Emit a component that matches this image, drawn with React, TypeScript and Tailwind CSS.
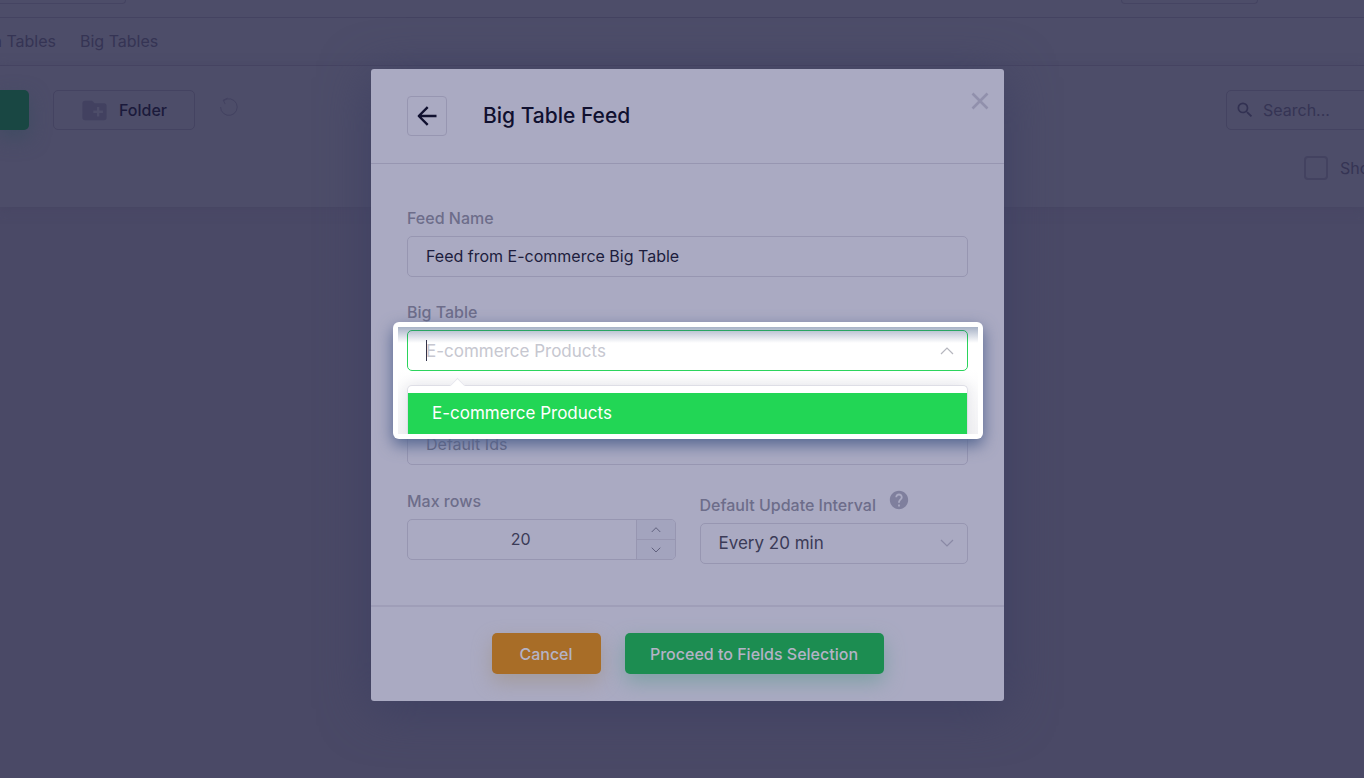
import React from "react";
import { MdCreateNewFolder, MdHelp, MdSearch } from "react-icons/md";

const fieldLabel = "block text-[16px] leading-5 font-medium text-[#6d6d8a]";
const fieldBox = "h-[41px] w-full rounded-[5px] border border-[#9796b1] bg-transparent outline-none";

function Chevron({ up = false, className = "" }: { up?: boolean; className?: string }) {
  return (
    <svg viewBox="0 0 14 8" fill="none" stroke="currentColor" className={className} aria-hidden="true">
      <path strokeWidth="1.2" d={up ? "M1 7l6-6 6 6" : "M1 1l6 6 6-6"} />
    </svg>
  );
}

function Backdrop() {
  return (
    <div className="min-h-screen overflow-hidden bg-[#4a4966]">
      <div className="flex h-[18px] items-start justify-between border-b border-[#444361] bg-[#4d4d69]">
        <div className="h-1 w-[126px] rounded-br-[5px] border-r border-b border-[#454462]" />
        <div className="mr-[106px] h-1 w-[137px] rounded-b-[5px] border border-t-0 border-[#454462]" />
      </div>
      <nav className="flex h-12 items-center gap-6 border-b border-[#444361] bg-[#4d4d69] pb-0.5 text-[16px] text-[#353454]">
        <div className="flex w-14 justify-end overflow-hidden">
          <a href="#data" className="shrink-0">Data Tables</a>
        </div>
        <a href="#big">Big Tables</a>
      </nav>
      <div className="h-[141px] bg-[#4d4d69] pt-6 shadow-[0_2px_10px_#474663]">
        <div className="flex items-start">
          <button aria-label="Add" className="h-10 w-[29px] rounded-r-[5px] bg-[#194743] shadow-[0_8px_20px_#3f4c62]" />
          <button className="ml-6 flex h-10 w-[142px] items-center gap-[10px] rounded-[5px] border border-[#444361] pl-[26px] text-[16px] font-medium text-[#1b1a3b]">
            <MdCreateNewFolder className="size-[29px] text-[#424160]" />
            Folder
          </button>
          <button aria-label="Refresh" className="mt-[7px] ml-6 text-[#424160]">
            <svg viewBox="0 0 20 20" fill="none" stroke="currentColor" className="size-5" aria-hidden="true">
              <path d="M4.7 3.6A8.3 8.3 0 1 1 1.6 10M8.7 1.1L4.2 3.1l2 4" />
            </svg>
          </button>
          <label className="-mr-px ml-auto flex h-10 w-[139px] items-center gap-2 rounded-l-[5px] border border-[#444361] pl-2 text-[#323152]">
            <MdSearch className="size-5 shrink-0" />
            <input
              aria-label="Search"
              placeholder="Search..."
              className="w-full min-w-0 bg-transparent text-[16px] outline-none placeholder:text-[#353454]"
            />
          </label>
        </div>
        <div className="mt-[26px] flex justify-end">
          <label className="flex w-[60px] items-center gap-3 overflow-hidden text-[16px] text-[#353454]">
            <input type="checkbox" className="size-6 shrink-0 appearance-none rounded-[4px] border-2 border-[#434260]" />
            <span>Show</span>
          </label>
        </div>
      </div>
    </div>
  );
}

function BigTablePicker() {
  return (
    <div className="absolute -top-2 -right-[15px] -left-[14px] z-10 rounded-[6px] bg-white p-[5px] shadow-[0_6px_16px_#52648f]">
      <div className="h-[107px] overflow-hidden bg-linear-to-b from-white from-40% to-[#f3f3f5] pt-[3px] pr-[10px] pl-[9px]">
        <div className="relative">
          <input
            id="big-table"
            placeholder="E-commerce Products"
            className="h-[41px] w-full rounded-[5px] border border-[#2bd45c] bg-white px-[18px] text-[17px] outline-none placeholder:text-[#c6c7d0]"
          />
          <span className="absolute top-[10px] left-[19px] h-[21px] w-px bg-[#33334a]" />
          <Chevron up className="absolute top-[17px] right-[14px] w-[14px] text-[#b5b6be]" />
        </div>
        <div role="listbox" className="relative mt-[14px] rounded-t-[5px] border border-b-0 border-[#dedee6] bg-white pt-[7px] shadow-[0_0_14px_#e2e2e8]">
          <span className="absolute -top-[6px] left-[44px] size-[11px] rotate-45 border-t border-l border-[#e8e8ee] bg-white" />
          <div role="option" aria-selected="true" className="relative flex h-[41px] items-center bg-[#22d655] pl-6 text-[17px] text-white">
            E-commerce Products
          </div>
          <div className="h-4" />
        </div>
      </div>
      <div className="pointer-events-none absolute inset-x-[5px] top-[5px] h-4 bg-linear-to-b from-[#243f72]/40 to-transparent" />
    </div>
  );
}

export default function App() {
  return (
    <div className="relative min-h-screen overflow-hidden font-['Inter',sans-serif]">
      <Backdrop />
      <div className="absolute inset-0 flex items-start justify-center pt-[69px] pl-[11px]">
        <section
          role="dialog"
          aria-label="Big Table Feed"
          className="w-full max-w-[633px] rounded-[3px] bg-[#aaaac2] shadow-[0_8px_50px_#3e4062]"
        >
          <header className="flex h-[95px] items-start border-b border-[#9796b1] pt-[27px] pr-[15px] pl-9">
            <button aria-label="Back" className="flex size-10 items-center justify-center rounded-[4px] border border-[#9796b1] text-[#10102f]">
              <svg viewBox="0 0 20 20" fill="none" stroke="currentColor" strokeWidth="2.4" strokeLinejoin="round" className="size-5" aria-hidden="true">
                <path d="M19.5 10H2M10.7 1.2L1.8 10l8.9 8.8" />
              </svg>
            </button>
            <h1 className="ml-9 text-[21px] leading-10 font-medium text-[#10102f]">Big Table Feed</h1>
            <button aria-label="Close" className="-mt-1 ml-auto text-[#9190ac]">
              <svg viewBox="0 0 18 18" fill="none" stroke="currentColor" strokeWidth="2.6" className="size-[18px]" aria-hidden="true">
                <path d="M1.5 1.5l15 15M16.5 1.5l-15 15" />
              </svg>
            </button>
          </header>

          <div className="px-9 pt-11 pb-[41px]">
            <label htmlFor="feed-name" className={fieldLabel}>Feed Name</label>
            <input
              id="feed-name"
              defaultValue="Feed from E-commerce Big Table"
              className={`${fieldBox} mt-2 px-[18px] pb-0.5 text-[16px] text-[#1d1d3d]`}
            />
            <label htmlFor="big-table" className={`${fieldLabel} mt-[25px]`}>Big Table</label>
            <div className="relative mt-2 h-[41px]">
              <BigTablePicker />
            </div>
            <input
              aria-label="Default Ids"
              placeholder="Default Ids"
              className={`${fieldBox} mt-[53px] block px-[18px] pb-0.5 text-[16px] placeholder:text-[#66667f]`}
            />
            <div className="mt-[26px] grid grid-cols-2 gap-6">
              <div>
                <label htmlFor="max-rows" className={fieldLabel}>Max rows</label>
                <div className="mt-2 flex h-[41px] overflow-hidden rounded-[5px] border border-[#9796b1]">
                  <input id="max-rows" defaultValue="20" className="min-w-0 flex-1 bg-transparent pr-0.5 pb-0.5 text-center text-[16px] text-[#3b3b57] outline-none" />
                  <div className="flex w-[39px] flex-col border-l border-[#9796b1] bg-[#a3a4be] text-[#555573]">
                    <button aria-label="Increase" className="flex flex-1 items-center justify-center border-b border-[#9796b1]">
                      <Chevron up className="w-[10px]" />
                    </button>
                    <button aria-label="Decrease" className="flex flex-1 items-center justify-center">
                      <Chevron className="w-[10px]" />
                    </button>
                  </div>
                </div>
              </div>
              <div className="pt-1">
                <div className="flex h-5 items-center">
                  <label htmlFor="interval" className={fieldLabel}>Default Update Interval</label>
                  <MdHelp className="mb-[10px] ml-3 size-[22px] text-[#7f7f9d]" />
                </div>
                <div className="relative mt-2">
                  <select id="interval" className={`${fieldBox} appearance-none px-[18px] text-[17px] text-[#3b3b57]`}>
                    <option>Every 20 min</option>
                  </select>
                  <Chevron className="pointer-events-none absolute top-4 right-[14px] w-[14px] text-[#8a89a5]" />
                </div>
              </div>
            </div>
          </div>

          <footer className="flex justify-center gap-6 border-t-2 border-[#9f9eb8] pt-[26px] pb-[27px] text-[16px] font-medium text-[#b4b3c6]">
            <button className="h-[41px] w-[109px] rounded-[5px] bg-[#a86d27] shadow-[0_8px_20px_#a39b9c]">Cancel</button>
            <button className="h-[41px] w-[259px] rounded-[5px] bg-[#1c8d51] shadow-[0_8px_20px_#7fa1a5]">Proceed to Fields Selection</button>
          </footer>
        </section>
      </div>
    </div>
  );
}
